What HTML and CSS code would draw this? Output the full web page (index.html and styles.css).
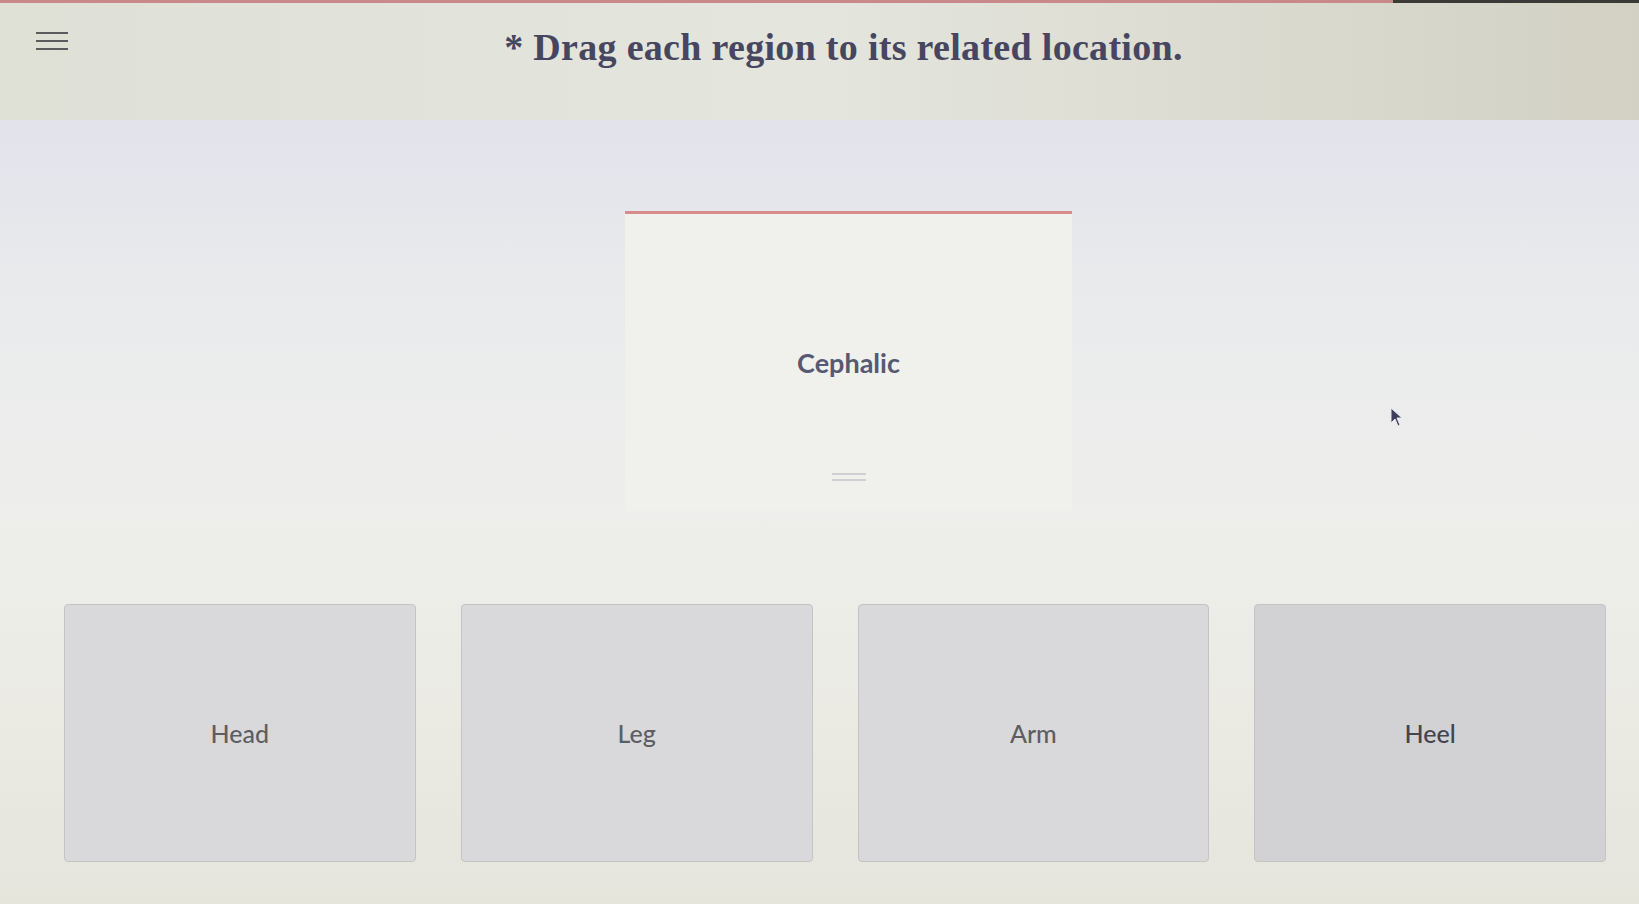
FILE: index.html
```html
<!DOCTYPE html>
<html lang="en">
<head>
  <meta charset="UTF-8">
  <meta name="viewport" content="width=device-width, initial-scale=1.0">
  <title>Drag and drop</title>
  <link rel="stylesheet" href="styles.css">
</head>
<body>
  <div class="progress"><div class="progress-fill"></div></div>
  <header>
    <button class="menu" aria-label="Menu">
      <span></span><span></span><span></span>
    </button>
    <h1>* Drag each region to its related location.</h1>
  </header>

  <main>
    <div class="drop-zone">
      <div class="term">Cephalic</div>
      <div class="handle"><span></span><span></span></div>
    </div>

    <div class="choices">
      <div class="choice">Head</div>
      <div class="choice">Leg</div>
      <div class="choice">Arm</div>
      <div class="choice">Heel</div>
    </div>

    <svg class="cursor" width="14" height="20" viewBox="0 0 14 20">
      <path d="M1 1 L1 16 L5 12 L8 19 L10 18 L7 11 L12 11 Z" fill="#3e3d5c" stroke="#e8e8ee" stroke-width="1"/>
    </svg>
  </main>
</body>
</html>
```

FILE: styles.css
```css
html, body {
  height: 100%;
}
body {
  margin: 0;
  font-family: Lato, "Open Sans", sans-serif;
  background: linear-gradient(90deg, #e9e9e4 0%, #eeeeea 50%, #e2e0d5 100%);
  color: #555;
  overflow: hidden;
}
.progress {
  height: 3px;
  background: #3a3a36;
}
.progress-fill {
  width: 1393px;
  height: 100%;
  background: #c9898a;
}
header {
  height: 117px;
  display: flex;
  align-items: flex-start;
  justify-content: center;
  position: relative;
  background: linear-gradient(90deg, #dfe0d6 0%, #e4e5dd 50%, #d2d1c4 100%);
}
.menu {
  position: absolute;
  left: 36px;
  top: 26px;
  width: 32px;
  height: 24px;
  border: none;
  background: none;
  display: flex;
  flex-direction: column;
  justify-content: space-between;
  padding: 3px 0;
  box-sizing: border-box;
}
.menu span {
  display: block;
  height: 2px;
  background: #5b5b60;
}
header h1 {
  margin: 22px 0 0 48px;
  font-family: "Liberation Serif", "DejaVu Serif", serif;
  font-size: 38px;
  font-weight: bold;
  color: #474660;
  letter-spacing: 0.3px;
}
main {
  position: relative;
  height: calc(100% - 120px);
  background: linear-gradient(180deg, #e2e3eb 0%, #e9eaec 20%, #eeeeec 50%, #ebebe4 75%, #e6e5dc 100%);
  display: flex;
  flex-direction: column;
  align-items: center;
  padding-top: 91px;
  box-sizing: border-box;
}
.drop-zone {
  width: 447px;
  height: 300px;
  margin-left: 58px;
  background: #f0f0ec;
  border-top: 3px solid #d88b8b;
  box-sizing: border-box;
  display: flex;
  flex-direction: column;
  align-items: center;
  justify-content: flex-end;
}
.term {
  font-size: 27px;
  font-weight: bold;
  color: #575872;
  margin-bottom: 94px;
}
.handle {
  display: flex;
  flex-direction: column;
  gap: 4px;
  width: 34px;
  margin-bottom: 30px;
}
.handle span {
  height: 2px;
  background: #cfcfd4;
}
.choices {
  display: grid;
  grid-template-columns: repeat(4, 1fr);
  gap: 45px;
  width: 1542px;
  margin-left: 31px;
  margin-top: 93px;
}
.choice {
  height: 256px;
  background: #d9d9db;
  border: 1px solid #c4c4c6;
  border-radius: 4px;
  display: flex;
  align-items: center;
  justify-content: center;
  font-size: 25px;
  font-weight: 500;
  color: #5e5e62;
}
.choice:nth-child(4) {
  color: #444450;
  background: #d2d2d4;
}
.cursor {
  position: absolute;
  left: 1390px;
  top: 287px;
}
```
